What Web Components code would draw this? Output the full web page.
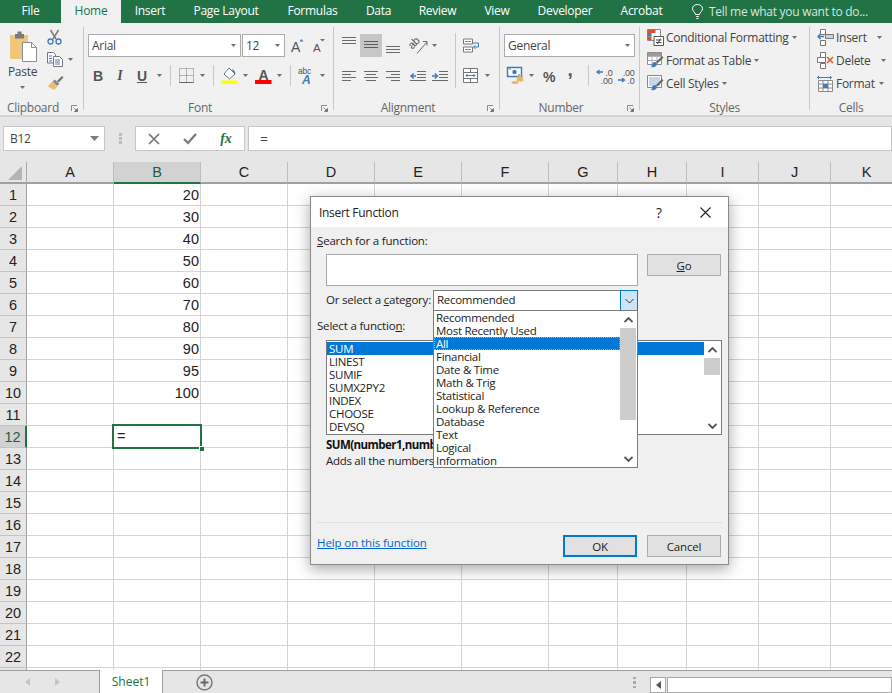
<!DOCTYPE html>
<html>
<head>
<meta charset="utf-8">
<title>Insert Function</title>
<style>
  html, body { margin: 0; padding: 0; }
  body {
    width: 892px; height: 693px; overflow: hidden; position: relative;
    display: flex; flex-direction: column;
    font-family: "Open Sans", "Noto Sans", sans-serif; font-size: 12px; color: #444;
    letter-spacing: -0.28px;
  }
</style>
</head>
<body>
<xl-tabs></xl-tabs>
<xl-ribbon></xl-ribbon>
<xl-formula-bar></xl-formula-bar>
<xl-sheet></xl-sheet>
<xl-status></xl-status>
<xl-dialog heading="Insert Function">
  <xl-listbox slot="popup" items="Recommended|Most Recently Used|All|Financial|Date &amp; Time|Math &amp; Trig|Statistical|Lookup &amp; Reference|Database|Text|Logical|Information" selected="2" focus thumb-top="0" thumb-h="92" pad="0" style="height:158px"></xl-listbox>
</xl-dialog>

<script>
const LINE = "#6a6a6a";
const BLUE = "#3f7cb8";

// all the ribbon icons, [width, height, svg]
const ICONS = {
  caret: [5, 3, `<path d="M0 0h5L2.5 3z" fill="#6f6f6f"/>`],
  launcher: [7, 7, `<path d="M.5 6V.5H6" fill="none" stroke="#8a8a8a"/><path d="M2.5 2.5l3 3M6.5 3.5v3h-3z" fill="#666" stroke="#666" stroke-width=".7"/>`],
  paste: [29, 31, `<path d="M1 4h18v24H1z" fill="#eec77c"/><path d="M6 3h2.500V.5h4V3H15v4.500H6z" fill="#7b7b7b"/><path d="M13.500 11.500h9l5 5v14h-14z" fill="#fff" stroke="#8c8c8c"/><path d="M22.500 11.500v5h5" fill="none" stroke="#8c8c8c"/>`],
  scissors: [15, 16, `<path d="M3.500 1l5.500 9M11.500 1L6 10" fill="none" stroke="#7d7d7d" stroke-width="1.600"/><circle cx="3.500" cy="12.500" r="2.500" fill="none" stroke="${BLUE}" stroke-width="1.300"/><circle cx="11.500" cy="12.500" r="2.500" fill="none" stroke="${BLUE}" stroke-width="1.300"/>`],
  copy: [16, 15, `<path d="M.5.5h6l2 2V11H.5z" fill="#fff" stroke="#777"/><path d="M6.500 4.500h6l3 3v7h-9z" fill="#fff" stroke="#777"/><path d="M2 4h3M2 6.500h3M2 9h3M8 8h5M8 10h5M8 12h5" stroke="${BLUE}"/>`],
  brush: [17, 15, `<path d="M10 6l5-5 1.500 1.500-5 5z" fill="#6e6e6e"/><path d="M8 4.500l4.500 4.500-2.500 2-4.500-4.500z" fill="#8a8a8a"/><path d="M5.500 6.500l5 5L7 15 1 11.500 2 10z" fill="#e9bd74"/>`],
  borders: [15, 15, `<path d="M.5.5h14v14H.5zM7.500.5v14M.5 7.500h14" fill="none" stroke="#777" stroke-dasharray="1 1"/><path d="M.5 14.500h14" stroke="#666"/>`],
  fill: [17, 17, `<path d="M8 1l6 6-5.500 5L3 7z" fill="#fff" stroke="#777"/><path d="M11 2c2 1 3 2 3.500 5L12 5z" fill="${BLUE}"/><path d="M0 13.500h16.500V17H0z" fill="#ffff00"/>`],
  color: [17, 17, `<text x="8.500" y="12.500" font-family="Liberation Sans" font-weight="700" font-size="14" text-anchor="middle" fill="#555">A</text><path d="M0 13h16.500v4H0z" fill="#ff0000"/>`],
  abc: [16, 18, `<text x="0" y="7" font-family="Liberation Sans" font-size="8.500" fill="#555">abc</text><text x="4" y="17" font-family="Liberation Sans" font-weight="700" font-style="italic" font-size="12" fill="${BLUE}">A</text>`],
  grow: [16, 16, `<text x="3" y="14" font-family="Liberation Sans" font-size="14" fill="#555">A</text><path d="M11.500 3.500l2-2.500 2 2.500z" fill="${BLUE}"/>`],
  shrink: [16, 16, `<text x="3" y="14" font-family="Liberation Sans" font-size="11.500" fill="#555">A</text><path d="M10 1h5l-2.500 2.500z" fill="${BLUE}"/>`],
  vtop: [14, 23, `<path d="M0 3.500h14M0 6.500h14M0 9.500h14" stroke="${LINE}"/>`],
  vmid: [14, 23, `<path d="M0 7.500h14M0 10.500h14M0 13.500h14" stroke="#5c5c5c"/>`],
  vbot: [14, 23, `<path d="M0 12.500h14M0 15.500h14M0 18.500h14" stroke="${LINE}"/>`],
  aleft: [14, 23, `<path d="M0 7.500h14M0 10.500h9M0 13.500h14M0 16.500h9" stroke="${LINE}"/>`],
  acenter: [14, 23, `<path d="M0 7.500h14M2 10.500h10M0 13.500h14M2 16.500h10" stroke="${LINE}"/>`],
  aright: [14, 23, `<path d="M0 7.500h14M5 10.500h9M0 13.500h14M5 16.500h9" stroke="${LINE}"/>`],
  indentl: [16, 23, `<path d="M7 7.500h9M7 10.500h9M7 13.500h9M0 16.500h16" stroke="${LINE}"/><path d="M6 12H2M3.800 9.500L1 12l2.800 2.500" fill="none" stroke="${BLUE}" stroke-width="1.500"/>`],
  indentr: [16, 23, `<path d="M7 7.500h9M7 10.500h9M7 13.500h9M0 16.500h16" stroke="${LINE}"/><path d="M0 12h4.500M2.700 9.500L5.500 12l-2.800 2.500" fill="none" stroke="${BLUE}" stroke-width="1.500"/>`],
  orient: [18, 18, `<text transform="translate(1.500 12) rotate(-45) translate(0 1)" font-family="Liberation Sans" font-size="11" fill="#555">ab</text><path d="M7 16.500L17 5M13 4.500H17V8.500" fill="none" stroke="#6a6a6a"/>`],
  wrap: [16, 16, `<path d="M.5 1h9v5h-9zM.5 9h9v5h-9z" fill="#fff" stroke="#777"/><path d="M2 3.500h6M2 11.500h6" stroke="#888"/><path d="M10 5h5.500v4H11M12.500 7l-2 2 2 2" fill="none" stroke="${BLUE}"/>`],
  merge: [16, 16, `<path d="M.5.5h14v14H.5zM.5 4.500h14M.5 10.500h14M7.500.5v4M7.500 10.500v4" fill="#fff" stroke="#777"/><path d="M3 7.500h9M4.500 6L3 7.500 4.500 9M10.500 6L12 7.500 10.500 9" fill="none" stroke="${BLUE}"/>`],
  currency: [17, 18, `<path d="M.5.500h14v9H.5z" fill="#fff" stroke="${BLUE}" stroke-width="1.500"/><circle cx="7.500" cy="5" r="2.200" fill="${BLUE}"/><path d="M2 2h2M11 8h2" stroke="${BLUE}"/><ellipse cx="13" cy="10.500" rx="3.500" ry="1.500" fill="#e6b566"/><ellipse cx="13" cy="13" rx="3.500" ry="1.500" fill="#e6b566"/><ellipse cx="8" cy="15.500" rx="3.500" ry="1.500" fill="#e6b566"/>`],
  percent: [14, 14, `<text x="7" y="12.500" font-family="Liberation Sans" font-weight="700" font-size="14" text-anchor="middle" fill="#555">%</text>`],
  comma: [8, 14, `<text x="4" y="7" font-family="Liberation Sans" font-weight="700" font-size="19" text-anchor="middle" fill="#555">,</text>`],
  incdec: [17, 16, `<text x="16.500" y="7.500" font-family="Liberation Sans" font-size="9" text-anchor="end" fill="#555">.0</text><text x="16.500" y="15.500" font-family="Liberation Sans" font-size="9" text-anchor="end" fill="#555">.00</text><path d="M7 4H1.500M3.500 2L1 4l2.500 2" fill="none" stroke="${BLUE}" stroke-width="1.300"/>`],
  decinc: [17, 16, `<text x="16.500" y="7.500" font-family="Liberation Sans" font-size="9" text-anchor="end" fill="#555">.00</text><text x="16.500" y="15.500" font-family="Liberation Sans" font-size="9" text-anchor="end" fill="#555">.0</text><path d="M0 12h6M4 10l2.500 2L4 14" fill="none" stroke="${BLUE}" stroke-width="1.300"/>`],
  cond: [17, 17, `<path d="M.5.500h13v11H.5z" fill="#fff" stroke="#8a8a8a"/><path d="M.5.500h8v3.500h-8z" fill="#d2552e"/><path d="M.5 4h4v3.500h-4z" fill="${BLUE}"/><path d="M.5 7.500h4V11h-4z" fill="#d2552e"/><path d="M7 7.500h9.500v9H7z" fill="#fff" stroke="#555"/><path d="M9 11h5.500M9 13.500h5.500M13.500 9.500l-3 5.500" fill="none" stroke="#444"/>`],
  table: [17, 17, `<path d="M.5.500h14v12H.5z" fill="#fff" stroke="#8a8a8a"/><path d="M.5 4.500h14M.5 8.500h14M5 .5v12M10 .5v12" stroke="#b0b0b0"/><path d="M1 1h13v3H1z" fill="#9a9a9a"/><path d="M9 10l6-6 1.500 1.500-6 6z" fill="#666"/><path d="M5 12c2-3 5-2 5 0s-3 4-6 3c1-1 1-2 1-3z" fill="${BLUE}"/>`],
  styles: [17, 17, `<path d="M.5.500h14v12H.5z" fill="#fff" stroke="#8a8a8a"/><path d="M2 2h11v9H2z" fill="#c9d6e6"/><path d="M9 10l6-6 1.500 1.500-6 6z" fill="#666"/><path d="M5 12c2-3 5-2 5 0s-3 4-6 3c1-1 1-2 1-3z" fill="${BLUE}"/>`],
  insert: [17, 17, `<path d="M3.500.5h5v5h-5zM3.500 11.500h5v5h-5z" fill="#fff" stroke="#777"/><path d="M8.500 5.500h8v4h-8z" fill="#c6d5e6" stroke="#777"/><path d="M1 7.500h6M3.500 5L1 7.500 3.500 10" fill="none" stroke="${BLUE}" stroke-width="1.500"/>`],
  del: [17, 17, `<path d="M3.500.5h5v5h-5zM3.500 11.500h5v5h-5zM.5 5.500h8v5h-8z" fill="#fff" stroke="#777"/><path d="M10 5l6 6M16 5l-6 6" stroke="#d9603b" stroke-width="1.600"/>`],
  format: [17, 17, `<path d="M.5 2.500h14M2 1L.5 2.500 2 4M13 1l1.500 1.500L13 4" fill="none" stroke="${BLUE}"/><path d="M1.500 5.500h14v11h-14zM1.500 9h14M1.500 13h14M6 5.500v11M11 5.500v11" fill="#fff" stroke="#8a8a8a"/><path d="M6 9h5v4H6z" fill="${BLUE}"/>`]
};

function ic(name) {
  const [w, h, body] = ICONS[name];
  return `<svg width="${w}" height="${h}" viewBox="0 0 ${w} ${h}" style="display:block;flex:none;overflow:visible">${body}</svg>`;
}

// fixed width cell with an icon in the middle
function cell(name, w) {
  return `<div class="c" style="width:${w}px">${ic(name)}</div>`;
}

class XlTabs extends HTMLElement {
  constructor() {
    super();
    this.attachShadow({ mode: "open" });
    const tabs = [["File", 61], ["Home", 60], ["Insert", 58], ["Page Layout", 94], ["Formulas", 79], ["Data", 53], ["Review", 65], ["View", 54], ["Developer", 82], ["Acrobat", 71]];
    this.shadowRoot.innerHTML = `
      <style>
        :host { display: flex; height: 23px; background: #217346; color: #fff; line-height: 22px; flex: none; }
        div { text-align: center; flex: none; }
        .on { background: #f1f1f1; color: #217346; }
        .tell { display: flex; align-items: center; padding-left: 15px; color: #d6e6de; text-align: left; }
        svg { margin-right: 6px; }
      </style>
      ${tabs.map(t => `<div style="width:${t[1]}px" class="${t[0] == "Home" ? "on" : ""}">${t[0]}</div>`).join("")}
      <div class="tell">
        <svg width="11" height="15" viewBox="0 0 11 15"><path d="M3.500 10.500C3 8 .5 7.500.5 4.500a5 4 0 0 1 10 0c0 3-2.500 3.500-3 6zM4 12.500h3M4.500 14.500h2" fill="none" stroke="#fff"/></svg>
        <span>Tell me what you want to do...</span>
      </div>
    `;
  }
}

class XlGroup extends HTMLElement {
  constructor() {
    super();
    this.attachShadow({ mode: "open" });
    this.shadowRoot.innerHTML = `
      <style>
        :host { display: flex; flex-direction: column; height: 92px; flex: none; box-sizing: border-box; }
        .body { flex: 1; min-height: 0; }
        .foot { display: flex; align-items: center; height: 14px; color: #666; line-height: 14px; }
        .foot span { flex: 1; text-align: center; }
        .foot div { width: 17px; display: flex; justify-content: flex-end; padding-right: 5px; box-sizing: border-box; }
      </style>
      <div class="body"><slot></slot></div>
      <div class="foot">
        <span></span>
        ${this.hasAttribute("launcher") ? `<div>${ic("launcher")}</div>` : ""}
      </div>
    `;
    this.shadowRoot.querySelector("span").textContent = this.getAttribute("label");
  }
}

class XlRibbon extends HTMLElement {
  constructor() {
    super();
    this.attachShadow({ mode: "open" });
    this.shadowRoot.innerHTML = `
      <style>
        :host { display: flex; height: 92px; background: #f1f1f1; border-bottom: 2px solid #d4d4d4; flex: none; overflow: hidden; }
        .sep { width: 1px; height: 83px; margin-top: 4px; background: #c8c8c8; flex: none; }
        .vs { width: 1px; height: 21px; background: #c8c8c8; flex: none; }
        .rows { display: flex; flex-direction: column; gap: 7px; padding: 11px 0 0 4px; }
        .row { display: flex; align-items: center; height: 23px; }
        .c { display: flex; align-items: center; justify-content: center; height: 23px; flex: none; }
        .sel { background: #c6c6c6; }
        .box { box-sizing: border-box; height: 23px; background: #fff; border: 1px solid #ababab; display: flex; align-items: center; padding: 0 3px; color: #444; flex: none; }
        .box span { flex: 1; }
        .box svg { margin-right: 1px; }
        .clip { display: flex; }
        .paste { width: 47px; display: flex; flex-direction: column; align-items: center; padding-top: 8px; }
        .paste span { line-height: 16px; margin-top: 2px; margin-right: 2px; }
        .paste svg:last-child { margin-top: 6px; margin-right: 2px; }
        .tools { padding-top: 6px; }
        .tools > div { display: flex; align-items: center; height: 15px; margin-bottom: 8px; }
        .tools svg:nth-child(2) { margin-left: 5px; }
        .split { display: flex; }
        .list { display: flex; flex-direction: column; padding-top: 3px; }
        .item { display: flex; align-items: center; height: 23px; color: #444; white-space: nowrap; }
        .item svg:first-child { margin-right: 2px; }
        .item svg:last-child { margin: 0 0 0 3px; }
        .tall { width: 1px; height: 55px; margin-top: 10px; background: #c8c8c8; flex: none; }
        .wrapcol { padding: 11px 0 0 7px; display: flex; flex-direction: column; gap: 7px; }
        .txt { font-family: "Liberation Sans", sans-serif; color: #555; font-size: 14px; letter-spacing: 0; }
      </style>

      <xl-group label="Clipboard" launcher style="width:83px">
        <div class="clip">
          <div class="paste">${ic("paste")}<span>Paste</span>${ic("caret")}</div>
          <div class="tools">
            <div>${ic("scissors")}</div>
            <div>${ic("copy")}${ic("caret")}</div>
            <div>${ic("brush")}</div>
          </div>
        </div>
      </xl-group>
      <div class="sep"></div>

      <xl-group label="Font" launcher style="width:249px">
        <div class="rows">
          <div class="row">
            <div class="box" style="width:153px"><span>Arial</span>${ic("caret")}</div>
            <div class="box" style="width:43px;margin-left:1px"><span>12</span>${ic("caret")}</div>
            ${cell("grow", 22)}${cell("shrink", 22)}
          </div>
          <div class="row" style="margin-left:-1px">
            <div class="c txt" style="width:22px;font-weight:700">B</div>
            <div class="c txt" style="width:22px;font-style:italic;font-family:'Liberation Serif';font-weight:700">I</div>
            <div class="c txt" style="width:22px;font-weight:700;text-decoration:underline">U</div>
            ${cell("caret", 12)}
            <div style="width:5px"></div><div class="vs"></div><div style="width:4px"></div>
            ${cell("borders", 22)}${cell("caret", 11)}
            <div style="width:5px"></div><div class="vs"></div><div style="width:4px"></div>
            ${cell("fill", 22)}${cell("caret", 10)}
            <div style="width:2px"></div>
            ${cell("color", 22)}${cell("caret", 10)}
            <div style="width:6px"></div><div class="vs"></div><div style="width:4px"></div>
            ${cell("abc", 22)}${cell("caret", 10)}
          </div>
        </div>
      </xl-group>
      <div class="sep"></div>

      <xl-group label="Alignment" launcher style="width:165px">
        <div class="split">
          <div class="rows" style="width:117px;box-sizing:content-box">
            <div class="row">
              ${cell("vtop", 22)}
              <div class="c sel" style="width:22px">${ic("vmid")}</div>
              ${cell("vbot", 22)}
              <div style="width:2px"></div>${cell("orient", 25)}${cell("caret", 7)}
            </div>
            <div class="row">
              ${cell("aleft", 22)}${cell("acenter", 22)}${cell("aright", 22)}
              <div style="width:3px"></div>${cell("indentl", 22)}${cell("indentr", 22)}
            </div>
          </div>
          <div class="tall"></div>
          <div class="wrapcol">
            <div class="row">${ic("wrap")}</div>
            <div class="row">${ic("merge")}<div style="width:6px"></div>${ic("caret")}</div>
          </div>
        </div>
      </xl-group>
      <div class="sep"></div>

      <xl-group label="Number" launcher style="width:139px">
        <div class="rows">
          <div class="row"><div class="box" style="width:131px"><span>General</span>${ic("caret")}</div></div>
          <div class="row">
            ${cell("currency", 22)}${cell("caret", 10)}
            <div style="width:1px"></div>${cell("percent", 24)}${cell("comma", 17)}
            <div style="width:10px"></div><div class="vs"></div><div style="width:4px"></div>
            ${cell("incdec", 22)}${cell("decinc", 22)}
          </div>
        </div>
      </xl-group>
      <div class="sep"></div>

      <xl-group label="Styles" style="width:169px">
        <div class="list" style="padding-left:7px">
          <div class="item">${ic("cond")}<span>Conditional Formatting</span>${ic("caret")}</div>
          <div class="item">${ic("table")}<span>Format as Table</span>${ic("caret")}</div>
          <div class="item">${ic("styles")}<span>Cell Styles</span>${ic("caret")}</div>
        </div>
      </xl-group>
      <div class="sep"></div>

      <xl-group label="Cells" style="width:82px">
        <div class="list" style="padding-left:7px">
          <div class="item">${ic("insert")}<span style="width:38px">Insert</span>${ic("caret")}</div>
          <div class="item">${ic("del")}<span style="width:42px">Delete</span>${ic("caret")}</div>
          <div class="item">${ic("format")}<span style="width:40px">Format</span>${ic("caret")}</div>
        </div>
      </xl-group>
    `;
  }
}

class XlFormulaBar extends HTMLElement {
  constructor() {
    super();
    this.attachShadow({ mode: "open" });
    this.shadowRoot.innerHTML = `
      <style>
        :host { display: flex; height: 45px; box-sizing: border-box; padding: 9px 0 11px 3px; background: #e6e6e6; flex: none; }
        .box { background: #fff; border: 1px solid #c6c6c6; box-sizing: border-box; display: flex; align-items: center; height: 25px; flex: none; }
        .name { width: 102px; padding: 0 5px 0 6px; }
        .name span { flex: 1; }
        .dots { width: 30px; display: flex; justify-content: center; padding-top: 7px; }
        .btns { width: 110px; }
        .btns div { width: 36px; display: flex; justify-content: center; }
        .fx { font-family: "Liberation Serif", serif; font-style: italic; font-weight: 700; font-size: 14px; color: #217346; letter-spacing: 0; }
        .input { margin-left: 3px; flex: 1; padding-left: 11px; font-size: 14px; }
      </style>
      <div class="box name"><span>B12</span><svg width="9" height="5"><path d="M0 0h9L4.500 5z" fill="#7b7b7b"/></svg></div>
      <div class="dots"><svg width="3" height="11"><path d="M0 0h3v3H0zM0 4h3v3H0zM0 8h3v3H0z" fill="#bbb"/></svg></div>
      <div class="box btns">
        <div><svg width="12" height="12"><path d="M1 1l10 10M11 1L1 11" stroke="#777" stroke-width="1.700"/></svg></div>
        <div><svg width="14" height="12"><path d="M1 6l4 4 8-9" fill="none" stroke="#777" stroke-width="2.200"/></svg></div>
        <div class="fx">fx</div>
      </div>
      <div class="box input">=</div>
    `;
  }
}

class XlSheet extends HTMLElement {
  constructor() {
    super();
    this.attachShadow({ mode: "open" });
    const cols = ["A", "B", "C", "D", "E", "F", "G", "H", "I", "J", "K"];
    const widths = [87, 87, 87, 87, 87, 87, 69, 69, 72, 72, 72];
    const values = { 1: 20, 2: 30, 3: 40, 4: 50, 5: 60, 6: 70, 7: 80, 8: 90, 9: 95, 10: 100 };

    let html = `<div class="corner"><svg width="15" height="14"><path d="M14 0v14H0z" fill="#b4b4b4"/></svg></div>`;
    cols.forEach(c => {
      html += `<div class="ch ${c == "B" ? "on" : ""}">${c}</div>`;
    });
    for (let r = 1; r <= 23; r++) {
      // row 23 only peeks out above the tab bar, no label fits there
      html += `<div class="rh ${r == 12 ? "on" : ""}">${r < 23 ? r : ""}</div>`;
      cols.forEach(c => {
        let inner = "";
        if (c == "B" && values[r]) inner = values[r];
        if (c == "B" && r == 12) inner = `<div class="sel">=<i></i></div>`;
        html += `<div class="td ${c == "B" && r != 12 ? "num" : ""}">${inner}</div>`;
      });
    }

    this.shadowRoot.innerHTML = `
      <style>
        :host { display: block; height: 508px; overflow: hidden; background: #fff; flex: none;
          font-family: "Liberation Sans", sans-serif; font-size: 14.5px; color: #222; letter-spacing: 0; }
        .grid { display: grid; grid-template-columns: 27px ${widths.map(w => w + "px").join(" ")}; grid-auto-rows: 22px; }
        .grid > div { box-sizing: border-box; }
        .corner { background: #e6e6e6; border-right: 1px solid #a8a8a8; border-bottom: 2px solid #a0a0a0; display: flex; justify-content: center; padding: 4px 0 0 4px; }
        .ch { background: #e6e6e6; border-right: 1px solid #bdbdbd; border-bottom: 2px solid #a0a0a0; text-align: center; line-height: 21px; }
        .ch.on { background: #d2d2d2; border-bottom-color: #217346; color: #1f5f3e; }
        .rh { background: #e6e6e6; border-right: 1px solid #a0a0a0; border-bottom: 1px solid #c4c4c4; text-align: center; line-height: 23px; }
        .rh.on { background: #d2d2d2; border-right: 2px solid #217346; color: #1f5f3e; }
        .td { border-right: 1px solid #d4d4d4; border-bottom: 1px solid #d4d4d4; line-height: 23px; position: relative; }
        .num { text-align: right; padding-right: 1px; }
        .sel { position: absolute; left: -2px; top: -2px; width: 90px; height: 25px; box-sizing: border-box; border: 2px solid #217346; padding-left: 3px; line-height: 21px; background: #fff; z-index: 1; }
        .sel i { position: absolute; right: -4px; bottom: -4px; width: 4px; height: 4px; background: #217346; border: 1px solid #fff; border-width: 1px 0 0 1px; }
      </style>
      <div class="grid">${html}</div>
    `;
  }
}

class XlStatus extends HTMLElement {
  constructor() {
    super();
    this.attachShadow({ mode: "open" });
    this.shadowRoot.innerHTML = `
      <style>
        :host { display: flex; height: 23px; box-sizing: border-box; background: #e6e6e6; border-top: 1px solid #a0a0a0; flex: none; align-items: stretch; }
        .nav { width: 99px; display: flex; align-items: center; padding-left: 25px; box-sizing: border-box; gap: 25px; flex: none; }
        .tab { width: 64px; box-sizing: border-box; margin-top: -1px; background: #fff; border: 1px solid #a0a0a0; border-width: 0 1px; color: #217346; text-align: center; line-height: 24px; letter-spacing: 0; flex: none; }
        .plus { width: 82px; display: flex; align-items: center; justify-content: center; flex: none; }
        .dots { margin-left: 388px; width: 8px; display: flex; align-items: center; flex: none; }
        .left { width: 16px; height: 16px; margin: 6px 0 0 9px; box-sizing: border-box; background: #fff; border: 1px solid #a8a8a8; display: flex; align-items: center; justify-content: center; flex: none; }
        .track { flex: 1; height: 16px; margin: 6px 0 0 1px; box-sizing: border-box; background: #fff; border: 1px solid #a8a8a8; }
      </style>
      <div class="nav">
        <svg width="5" height="8"><path d="M5 0v8L0 4z" fill="#c4c4c4"/></svg>
        <svg width="5" height="8"><path d="M0 0v8l5-4z" fill="#c4c4c4"/></svg>
      </div>
      <div class="tab">Sheet1</div>
      <div class="plus">
        <svg width="17" height="17"><circle cx="8.500" cy="8.500" r="7.500" fill="none" stroke="#7a7a7a" stroke-width="1.500"/><path d="M4.500 8.500h8M8.500 4.500v8" stroke="#6a6a6a" stroke-width="2"/></svg>
      </div>
      <div class="dots"><svg width="3" height="11"><path d="M0 0h3v2H0zM0 4h3v3H0zM0 9h3v2H0z" fill="#aaa"/></svg></div>
      <div class="left"><svg width="5" height="8"><path d="M5 0v8L0 4z" fill="#555"/></svg></div>
      <div class="track"></div>
    `;
  }
}

class XlButton extends HTMLElement {
  constructor() {
    super();
    this.attachShadow({ mode: "open" });
    this.shadowRoot.innerHTML = `
      <style>
        :host { display: flex; align-items: center; justify-content: center; box-sizing: border-box; width: 74px; height: 22px; background: #e1e1e1; border: 1px solid #adadad; color: #222; flex: none; }
        :host([primary]) { border: 2px solid #0078d7; }
      </style>
      <slot></slot>
    `;
  }
}

class XlListbox extends HTMLElement {
  constructor() {
    super();
    this.attachShadow({ mode: "open" });
    const items = this.getAttribute("items").split("|");
    const selected = Number(this.getAttribute("selected"));
    const pad = this.getAttribute("pad") || 0;
    const chev = d => `<svg width="9" height="6" viewBox="0 0 9 6"><path d="${d}" fill="none" stroke="#555" stroke-width="1.800"/></svg>`;
    this.shadowRoot.innerHTML = `
      <style>
        :host { display: flex; box-sizing: border-box; background: #fff; border: 1px solid #7a7a7a; color: #222; font-size: 11.5px; letter-spacing: -0.28px; }
        .items { flex: 1; min-width: 0; padding-top: ${pad}px; overflow: hidden; }
        .items div { height: 13px; line-height: 14px; padding-left: 2px; white-space: nowrap; }
        .items .on { background: #0078d7; color: #fff; }
        :host([focus]) .items .on { outline: 1px dotted #e7a13c; outline-offset: -1px; }
        .bar { width: 16px; margin-right: 1px; display: flex; flex-direction: column; flex: none; }
        .arrow { height: 17px; display: flex; align-items: center; justify-content: center; flex: none; }
        .track { flex: 1; }
        .thumb { background: #cdcdcd; margin-top: ${this.getAttribute("thumb-top")}px; height: ${this.getAttribute("thumb-h")}px; }
      </style>
      <div class="items">
        ${items.map((t, i) => `<div class="${i == selected ? "on" : ""}">${t.replace(/&/g, "&amp;")}</div>`).join("")}
      </div>
      <div class="bar">
        <div class="arrow">${chev("M.5 5l4-4 4 4")}</div>
        <div class="track"><div class="thumb"></div></div>
        <div class="arrow">${chev("M.5 1l4 4 4-4")}</div>
      </div>
    `;
  }
}

class XlDialog extends HTMLElement {
  constructor() {
    super();
    this.attachShadow({ mode: "open" });
    this.shadowRoot.innerHTML = `
      <style>
        :host { position: absolute; left: 310px; top: 196px; width: 419px; height: 369px; box-sizing: border-box; display: flex; flex-direction: column;
          background: #f0f0f0; border: 1px solid #8a8a8a; box-shadow: 0 4px 14px rgba(0,0,0,.35); color: #222; font-size: 11.5px; letter-spacing: -0.19px; }
        .title { display: flex; align-items: center; height: 30px; background: #fff; flex: none; font-size: 12px; letter-spacing: -0.3px; }
        .title span { flex: 1; padding-left: 8px; }
        .cap { width: 46px; display: flex; justify-content: center; }
        .cap.q { font-size: 14px; letter-spacing: 0; }
        .body { flex: 1; padding: 6px 6px 0; }
        .lb { line-height: 16px; }
        .r { display: flex; margin-left: 9px; }
        .search { margin-top: 5px; gap: 9px; }
        .text { width: 312px; height: 32px; box-sizing: border-box; background: #fff; border: 1px solid #aaa; }
        .cat { margin-top: 4px; height: 21px; align-items: center; }
        .cat label { width: 107px; flex: none; white-space: nowrap; padding-bottom: 2px; }
        .combo { width: 205px; height: 21px; box-sizing: border-box; background: #fff; border: 1px solid #7a7a7a; display: flex; align-items: center; padding-left: 3px; letter-spacing: -0.28px; }
        .combo span { flex: 1; padding-bottom: 2px; }
        .combo div { width: 18px; height: 21px; margin-right: -1px; box-sizing: border-box; background: #cce4f7; border: 1px solid #0078d7; display: flex; align-items: center; justify-content: center; }
        .fl { margin: 7px 0 6px; }
        xl-listbox { margin-left: 9px; width: 396px; height: 95px; }
        .bold { margin-top: 2px; margin-left: 9px; width: 110px; white-space: nowrap; line-height: 16px; font-weight: 700; color: #111; letter-spacing: -0.55px; }
        .adds { margin-left: 9px; width: 110px; white-space: nowrap; line-height: 16px; letter-spacing: -0.3px; }
        .rule { margin-top: 53px; height: 1px; background: #dfdfdf; }
        .foot { display: flex; margin-top: 12px; padding-right: 1px; gap: 10px; }
        .foot a { flex: 1; color: #0066cc; text-decoration: underline; line-height: 16px; letter-spacing: -0.1px; }
        .popup { position: absolute; left: 122px; top: 113px; width: 205px; z-index: 2; }
        .popup ::slotted(*) { width: 100%; }
      </style>
      <div class="title">
        <span></span>
        <div class="cap q">?</div>
        <div class="cap"><svg width="11" height="11"><path d="M.5.5l10 10M10.500.5l-10 10" stroke="#222" stroke-width="1.100"/></svg></div>
      </div>
      <div class="body">
        <div class="lb"><u>S</u>earch for a function:</div>
        <div class="r search">
          <div class="text"></div>
          <xl-button><span><u>G</u>o</span></xl-button>
        </div>
        <div class="r cat">
          <label>Or select a <u>c</u>ategory:</label>
          <div class="combo"><span>Recommended</span><div><svg width="9" height="6" viewBox="0 0 9 6"><path d="M.5 1l4 4 4-4" fill="none" stroke="#333"/></svg></div></div>
        </div>
        <div class="lb fl">Select a functio<u>n</u>:</div>
        <xl-listbox items="SUM|LINEST|SUMIF|SUMX2PY2|INDEX|CHOOSE|DEVSQ" selected="0" thumb-top="0" thumb-h="17" pad="1"></xl-listbox>
        <div class="bold">SUM(number1,numb</div>
        <div class="adds">Adds all the numbers</div>
        <div class="rule"></div>
        <div class="foot">
          <a>Help on this function</a>
          <xl-button primary>OK</xl-button>
          <xl-button>Cancel</xl-button>
        </div>
      </div>
      <div class="popup"><slot name="popup"></slot></div>
    `;
    this.shadowRoot.querySelector(".title span").textContent = this.getAttribute("heading");
  }
}

customElements.define("xl-tabs", XlTabs);
customElements.define("xl-group", XlGroup);
customElements.define("xl-ribbon", XlRibbon);
customElements.define("xl-formula-bar", XlFormulaBar);
customElements.define("xl-sheet", XlSheet);
customElements.define("xl-status", XlStatus);
customElements.define("xl-button", XlButton);
customElements.define("xl-listbox", XlListbox);
customElements.define("xl-dialog", XlDialog);
</script>
</body>
</html>
